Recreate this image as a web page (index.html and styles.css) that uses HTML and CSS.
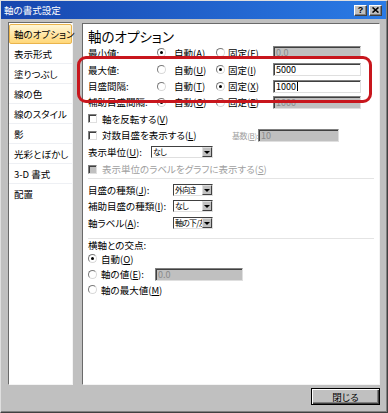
FILE: index.html
```html
<!DOCTYPE html>
<html lang="ja">
<head>
  <meta charset="UTF-8">
  <title>軸の書式設定</title>
  <link rel="stylesheet" href="styles.css">
</head>
<body>

<div class="window">
  <div class="titlebar">
    <span class="title">軸の書式設定</span>
    <div class="title-btns">
      <span class="tbtn">?</span>
      <span class="tbtn">
        <svg width="7" height="6" viewBox="0 0 7 6"><path d="M0.5 0.5 L6.5 5.5 M6.5 0.5 L0.5 5.5" stroke="#000" stroke-width="1.6"/></svg>
      </span>
    </div>
  </div>

  <div class="main">
    <ul class="nav">
      <li class="active">軸のオプション</li>
      <li>表示形式</li>
      <li>塗りつぶし</li>
      <li>線の色</li>
      <li>線のスタイル</li>
      <li>影</li>
      <li>光彩とぼかし</li>
      <li>3-D 書式</li>
      <li>配置</li>
    </ul>

    <div class="panel">
      <h2>軸のオプション</h2>

      <div class="row opt h17">
        <span class="lbl">最小値:</span>
        <label class="radio r1"><i class="rb on"></i>自動(<u>A</u>)</label>
        <label class="radio r2"><i class="rb"></i>固定(<u>F</u>)</label>
        <span class="field off">0.0</span>
      </div>
      <div class="row opt h17">
        <span class="lbl">最大値:</span>
        <label class="radio r1"><i class="rb"></i>自動(<u>U</u>)</label>
        <label class="radio r2"><i class="rb on"></i>固定(<u>I</u>)</label>
        <span class="field">5000</span>
      </div>
      <div class="row opt h16">
        <span class="lbl">目盛間隔:</span>
        <label class="radio r1"><i class="rb"></i>自動(<u>T</u>)</label>
        <label class="radio r2"><i class="rb on"></i>固定(<u>X</u>)</label>
        <span class="field">1000<i class="caret"></i></span>
      </div>
      <div class="row opt h16">
        <span class="lbl">補助目盛間隔:</span>
        <label class="radio r1"><i class="rb on"></i>自動(<u>O</u>)</label>
        <label class="radio r2"><i class="rb"></i>固定(<u>E</u>)</label>
        <span class="field off">1000</span>
      </div>

      <div class="row h17">
        <i class="cb"></i><span>軸を反転する(<u>V</u>)</span>
      </div>
      <div class="row h16">
        <i class="cb"></i><span class="log-text">対数目盛を表示する(<u>L</u>)</span>
        <span class="base muted">基数(<u>B</u>):</span>
        <span class="field off short">10</span>
      </div>
      <div class="row h18">
        <span class="unit-lbl">表示単位(<u>U</u>):</span>
        <span class="select wide"><span class="val">なし</span><span class="arrow"></span></span>
      </div>
      <div class="row h16 muted">
        <i class="cb off"></i><span>表示単位のラベルをグラフに表示する(<u>S</u>)</span>
      </div>

      <div class="sep first"></div>

      <div class="row h16">
        <span class="tick-lbl">目盛の種類(<u>J</u>):</span>
        <span class="select"><span class="val">外向き</span><span class="arrow"></span></span>
      </div>
      <div class="row h16">
        <span class="tick-lbl">補助目盛の種類(<u>I</u>):</span>
        <span class="select"><span class="val">なし</span><span class="arrow"></span></span>
      </div>
      <div class="row h17">
        <span class="tick-lbl">軸ラベル(<u>A</u>):</span>
        <span class="select"><span class="val">軸の下/左</span><span class="arrow"></span></span>
      </div>

      <div class="sep second"></div>

      <div class="row h12">横軸との交点:</div>
      <div class="row h15">
        <label class="radio"><i class="rb on"></i>自動(<u>O</u>)</label>
      </div>
      <div class="row h16">
        <label class="radio cross"><i class="rb"></i>軸の値(<u>E</u>):</label>
        <span class="field off">0.0</span>
      </div>
      <div class="row h15">
        <label class="radio"><i class="rb"></i>軸の最大値(<u>M</u>)</label>
      </div>
    </div>
  </div>

  <div class="footer">
    <button class="btn">閉じる</button>
  </div>

  <div class="mark"></div>
</div>

</body>
</html>
```

FILE: styles.css
```css
* {
  box-sizing: border-box;
}

body {
  margin: 0;
  font-family: "Noto Sans CJK JP", "Noto Sans", sans-serif;
  font-size: 9.5px;
  font-feature-settings: "palt";
  color: #000;
}

.window {
  position: relative;
  width: 388px;
  height: 413px;
  background: #c0c0c0;
  border: 1px solid;
  border-color: #dfdfdf #404040 #404040 #dfdfdf;
  box-shadow: inset -1px -1px #808080;
}

/* title bar */
.titlebar {
  height: 18px;
  margin-right: 1px;
  padding: 0 4px 0 3px;
  display: flex;
  align-items: center;
  justify-content: space-between;
  background: linear-gradient(90deg, #1746ae, #2a7be6);
  color: #fff;
}

.title-btns {
  display: flex;
  gap: 2px;
}

.tbtn {
  width: 13px;
  height: 11px;
  display: flex;
  align-items: center;
  justify-content: center;
  background: #c0c0c0;
  border: 1px solid;
  border-color: #fff #404040 #404040 #fff;
  box-shadow: inset -1px -1px #808080;
  color: #000;
  font: bold 9px "Liberation Sans", sans-serif;
}

/* body */
.main {
  display: flex;
  align-items: flex-start;
  padding: 3px 0 0 7px;
}

.nav {
  list-style: none;
  margin: 0;
  padding: 1px 0 0;
  width: 65px;
  height: 363px;
  background: #fff;
  border: 1px solid;
  border-color: #6a6a6a #f4f4f4 #f4f4f4 #6a6a6a;
}

.nav li {
  height: 20px;
  display: flex;
  align-items: center;
  padding-left: 5px;
  border-bottom: 1px solid #eef0f4;
  white-space: nowrap;
}

.nav li:last-child {
  border-bottom: none;
}

.nav li.active {
  padding-left: 4px;
  background: linear-gradient(#fff6d6, #ffd778);
  border: 1px solid #eab44c;
  border-radius: 2px;
}

.panel {
  margin: 1px 0 0 9px;
  width: 298px;
  height: 362px;
  padding: 4px 4px 0 5px;
  background: #fff;
  border: 1px solid;
  border-color: #6a6a6a #f4f4f4 #f4f4f4 #6a6a6a;
}

.panel h2 {
  margin: 0;
  height: 16px;
  line-height: 16px;
  font-size: 13.5px;
  font-weight: normal;
}

.row {
  display: flex;
  align-items: center;
  white-space: nowrap;
}

.h12 { height: 12px; }
.h15 { height: 15px; }
.h16 { height: 16px; }
.h17 { height: 17px; }
.h18 { height: 18px; }

.opt .lbl { width: 69px; }
.opt .r1 { width: 59px; }
.opt .r2 { width: 57px; }
.opt .r1 .rb { margin-right: 8px; }
.opt .r2 .rb { margin-right: 3px; }

u {
  text-decoration: underline;
  text-underline-offset: 1px;
}

.radio {
  display: flex;
  align-items: center;
}

.rb {
  position: relative;
  width: 9px;
  height: 9px;
  margin-right: 4px;
  border-radius: 50%;
  border: 1px solid;
  border-color: #7a7a7a #d8d8d8 #d8d8d8 #7a7a7a;
  background: #fff;
}

.rb.on::after {
  content: "";
  position: absolute;
  left: 2px;
  top: 2px;
  width: 3px;
  height: 3px;
  border-radius: 50%;
  background: #000;
}

.cb {
  width: 9px;
  height: 9px;
  margin-right: 5px;
  border: 1px solid;
  border-color: #808080 #dfdfdf #dfdfdf #808080;
  box-shadow: inset 1px 1px #404040;
  background: #fff;
}

.cb.off {
  background: #c0c0c0;
}

.field {
  width: 88px;
  height: 13px;
  padding-left: 2px;
  display: flex;
  align-items: center;
  border: 1px solid;
  border-color: #808080 #dfdfdf #dfdfdf #808080;
  box-shadow: inset 1px 1px #404040;
  background: #fff;
  font-size: 9px;
}

.field.off {
  background: #c0c0c0;
  color: #8a8a8a;
}

.field.short {
  width: 81px;
}

.caret {
  width: 1px;
  height: 9px;
  margin-left: 1px;
  background: #000;
}

.muted {
  color: #a0a0a0;
}

.log-text {
  width: 130px;
}

.base {
  width: 26px;
  font-size: 8px;
  letter-spacing: -0.4px;
}

.unit-lbl { width: 63px; }
.tick-lbl { width: 85px; }
.cross { width: 67px; }

.select {
  width: 40px;
  height: 12px;
  display: flex;
  border: 1px solid;
  border-color: #404040 #dfdfdf #dfdfdf #404040;
  background: #fff;
}

.select.wide {
  width: 62px;
}

.select .val {
  flex: 1;
  min-width: 0;
  padding-left: 1px;
  line-height: 10px;
  font-size: 8px;
  letter-spacing: -0.8px;
}

.select .arrow {
  position: relative;
  flex: none;
  width: 10px;
  background: #c0c0c0;
  border: 1px solid;
  border-color: #dfdfdf #404040 #404040 #dfdfdf;
}

.select .arrow::after {
  content: "";
  position: absolute;
  left: 1px;
  top: 3px;
  border-left: 3px solid transparent;
  border-right: 3px solid transparent;
  border-top: 3px solid #000;
}

.sep {
  height: 1px;
  margin-right: 1px;
  background: #e4e4e4;
}

.sep.first {
  margin-top: 1px;
  margin-bottom: 3px;
}

.sep.second {
  margin-top: 7px;
}

.footer {
  display: flex;
  justify-content: flex-end;
  padding: 3px 7px 0 0;
}

.btn {
  width: 69px;
  height: 17px;
  padding: 0;
  background: #c0c0c0;
  border: 1px solid #000;
  box-shadow: inset 1px 1px #fff, inset -1px -1px #404040, inset -2px -2px #808080;
  font: inherit;
}

.mark {
  position: absolute;
  left: 76px;
  top: 55px;
  width: 295px;
  height: 47px;
  border: 3px solid #c8161d;
  border-radius: 9px;
}
```
